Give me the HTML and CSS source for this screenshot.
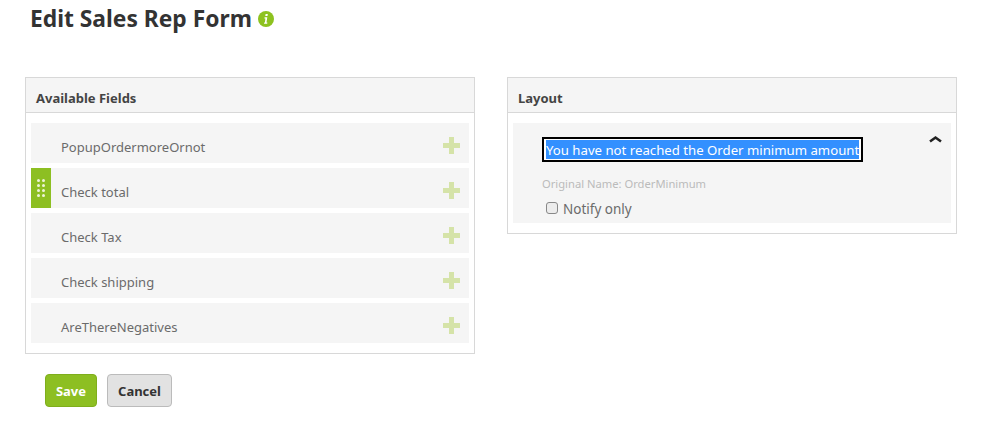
FILE: index.html
```html
<!DOCTYPE html>
<html lang="en">
<head>
  <meta charset="UTF-8" />
  <title>Edit Sales Rep Form</title>
  <link rel="stylesheet" href="styles.css">
</head>
<body>

  <div class="title-bar">
    <h1>Edit Sales Rep Form</h1>
    <svg class="info-icon" width="16" height="16" viewBox="0 0 16 16">
      <circle cx="8" cy="8" r="8" fill="#8dc21f"/>
      <path d="M7.6 3h2.2l-.3 2H7.3zM6.6 6.2h2.7l-.8 5.2h.9l-.2 1.4H6l.2-1.4h.7l.5-3.8h-1z" fill="#fff"/>
    </svg>
  </div>

  <div class="columns">
    <div class="panel">
      <div class="panel-head">Available Fields</div>
      <div class="panel-body">
        <div class="field">
          <span class="field-name">PopupOrdermoreOrnot</span>
          <span class="plus"></span>
        </div>
        <div class="field active">
          <span class="grip"><i></i><i></i><i></i><i></i><i></i><i></i><i></i><i></i></span>
          <span class="field-name">Check total</span>
          <span class="plus"></span>
        </div>
        <div class="field">
          <span class="field-name">Check Tax</span>
          <span class="plus"></span>
        </div>
        <div class="field">
          <span class="field-name">Check shipping</span>
          <span class="plus"></span>
        </div>
        <div class="field">
          <span class="field-name">AreThereNegatives</span>
          <span class="plus"></span>
        </div>
      </div>
    </div>

    <div class="panel">
      <div class="panel-head">Layout</div>
      <div class="panel-body">
        <div class="layout-item">
          <svg class="collapse" width="13" height="8" viewBox="0 0 13 8">
            <path d="M1 6.5l5.5-4 5.5 4" fill="none" stroke="#222" stroke-width="2.6"/>
          </svg>
          <div class="label-input"><span class="selected">You have not reached the Order minimum amount</span></div>
          <div class="original-name">Original Name: OrderMinimum</div>
          <label class="notify"><input type="checkbox"> Notify only</label>
        </div>
      </div>
    </div>
  </div>

  <div class="actions">
    <button class="btn btn-save">Save</button>
    <button class="btn btn-cancel">Cancel</button>
  </div>

</body>
</html>
```

FILE: styles.css
```css
:root {
  --green: #8dbf22;
  --border: #d8d8d8;
  --row-bg: #f5f5f5;
  --text: #6b6b6b;
}

body {
  margin: 0;
  padding: 0 0 0 25px;
  font-family: 'Noto Sans', 'Open Sans', sans-serif;
  color: var(--text);
  background: #fff;
  overflow: hidden;
}

.title-bar {
  display: flex;
  align-items: center;
  gap: 6px;
  height: 37px;
  padding-left: 5px;
}

h1 {
  margin: 0;
  font-size: 22.8px;
  font-weight: 700;
  color: #333;
}

.columns {
  display: flex;
  align-items: flex-start;
  gap: 32px;
  margin-top: 40px;
}

.panel {
  width: 450px;
  box-sizing: border-box;
  border: 1px solid var(--border);
}

.panel-head {
  height: 34px;
  line-height: 41px;
  padding-left: 10px;
  font-size: 13px;
  font-weight: 700;
  color: #444;
  background: var(--row-bg);
  border-bottom: 1px solid var(--border);
}

.panel-body {
  display: flex;
  flex-direction: column;
  gap: 5px;
  padding: 10px 5px;
}

.field {
  display: flex;
  align-items: center;
  height: 40px;
  padding: 8px 0 0 30px;
  box-sizing: border-box;
  position: relative;
  background: var(--row-bg);
  font-size: 13px;
}

.field-name {
  flex: 1;
}

.plus {
  width: 17px;
  height: 17px;
  margin: -4px 9px 0 0;
  background:
    linear-gradient(#d5e3a8, #d5e3a8) center / 17px 5px no-repeat,
    linear-gradient(#d5e3a8, #d5e3a8) center / 5px 17px no-repeat;
}

.grip {
  position: absolute;
  left: 0;
  top: 0;
  width: 20px;
  height: 40px;
  box-sizing: border-box;
  padding: 11px 0 0 6px;
  display: grid;
  grid-template-columns: 3px 3px;
  grid-auto-rows: 3px;
  column-gap: 2px;
  row-gap: 2px;
  background: var(--green);
}

.grip i {
  background: #eef4d8;
  border-radius: 50%;
}

.layout-item {
  position: relative;
  height: 100px;
  box-sizing: border-box;
  padding: 14px 0 0 29px;
  background: var(--row-bg);
}

.collapse {
  position: absolute;
  top: 12px;
  right: 9px;
}

.label-input {
  display: inline-block;
  border: 2px solid #000;
  padding: 1px 2px;
  background: #fff;
  font-size: 13.2px;
  white-space: nowrap;
}

.selected {
  display: block;
  height: 19px;
  line-height: 21px;
  background: #3390ff;
  color: #fff;
}

.original-name {
  margin-top: 14px;
  font-size: 11.2px;
  color: #bbb;
}

.notify {
  display: flex;
  align-items: center;
  gap: 5px;
  margin: 9px 0 0 4px;
  font-size: 13.5px;
}

.notify input {
  appearance: none;
  margin: -3px 0 0;
  width: 12px;
  height: 12px;
  background: #ececec;
  border: 1px solid #888;
  border-radius: 3px;
}

.actions {
  display: flex;
  gap: 10px;
  margin: 20px 0 0 20px;
}

.btn {
  height: 33px;
  padding: 0;
  border-radius: 4px;
  font-family: inherit;
  font-size: 13px;
  font-weight: 700;
}

.btn-save {
  width: 52px;
  color: #fff;
  background: var(--green);
  border: 1px solid #7fae1c;
}

.btn-cancel {
  width: 65px;
  color: #333;
  background: #e2e2e2;
  border: 1px solid #bbb;
}
```
